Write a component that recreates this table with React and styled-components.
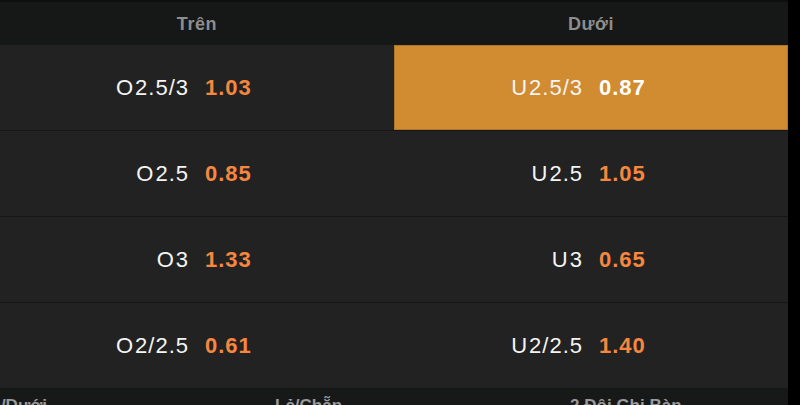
import styled, { createGlobalStyle } from "styled-components";

const GlobalStyle = createGlobalStyle`
  html, body {
    margin: 0;
    padding: 0;
    background: #000;
    font-family: "Liberation Sans", Arial, sans-serif;
  }
`;

const Page = styled.div`
  width: 800px;
  height: 405px;
  overflow: hidden;
  background: #000;
`;

const Board = styled.div`
  width: 788px;
  height: 405px;
  overflow: hidden;
  display: flex;
  flex-direction: column;
  background: #222222;
`;

const HeaderRow = styled.div`
  flex-shrink: 0;
  display: grid;
  grid-template-columns: 1fr 1fr;
  height: 45px;
  box-sizing: border-box;
  border-top: 2px solid #0e0f0f;
  padding-top: 1px;
  background: #161717;
`;

const HeaderCell = styled.div`
  display: flex;
  align-items: center;
  justify-content: center;
  color: #8d8d8d;
  font-size: 18px;
  font-weight: bold;
  letter-spacing: 0.6px;
`;

const OddsRow = styled.div`
  flex-shrink: 0;
  display: grid;
  grid-template-columns: 1fr 1fr;
  height: 86px;
  box-sizing: border-box;
  border-bottom: 1px solid #161616;
`;

const Cell = styled.div`
  display: grid;
  grid-template-columns: 1fr 1fr;
  column-gap: 16px;
  align-items: center;
  background: ${(p) => (p.$active ? "#d18b31" : "#222222")};
  box-shadow: ${(p) => (p.$active ? "inset 0 0 0 1px #b0742a" : "none")};
  font-size: 22px;
  letter-spacing: 1px;
`;

const Label = styled.span`
  justify-self: end;
  color: #f4f4f4;
  white-space: nowrap;
`;

const Side = styled.span`
  margin-right: 1px;
`;

const Price = styled.span`
  justify-self: start;
  font-weight: bold;
  color: ${(p) => (p.$active ? "#ffffff" : "#f7873f")};
`;

const TabStrip = styled.div`
  flex: 1;
  display: flex;
  gap: 228px;
  margin-left: -35px;
  padding-top: 7px;
  background: #171919;
`;

const Tab = styled.span`
  color: #9a9a9a;
  font-size: 17px;
  font-weight: bold;
  line-height: 20px;
  white-space: nowrap;
`;

const rows = [
  { over: "2.5/3", overPrice: "1.03", under: "2.5/3", underPrice: "0.87", picked: "under" },
  { over: "2.5", overPrice: "0.85", under: "2.5", underPrice: "1.05" },
  { over: "3", overPrice: "1.33", under: "3", underPrice: "0.65" },
  { over: "2/2.5", overPrice: "0.61", under: "2/2.5", underPrice: "1.40" },
];

const tabs = ["Trên/Dưới", "Lẻ/Chẵn", "2 Đội Ghi Bàn"];

const App = () => {
  return (
    <Page>
      <GlobalStyle />
      <Board>
        <HeaderRow>
          <HeaderCell>Trên</HeaderCell>
          <HeaderCell>Dưới</HeaderCell>
        </HeaderRow>
        {rows.map((row) => (
          <OddsRow key={row.over}>
            <Cell $active={row.picked === "over"}>
              <Label>
                <Side>O</Side>
                {row.over}
              </Label>
              <Price $active={row.picked === "over"}>{row.overPrice}</Price>
            </Cell>
            <Cell $active={row.picked === "under"}>
              <Label>
                <Side>U</Side>
                {row.under}
              </Label>
              <Price $active={row.picked === "under"}>{row.underPrice}</Price>
            </Cell>
          </OddsRow>
        ))}
        <TabStrip>
          {tabs.map((t) => (
            <Tab key={t}>{t}</Tab>
          ))}
        </TabStrip>
      </Board>
    </Page>
  );
};

export default App;
